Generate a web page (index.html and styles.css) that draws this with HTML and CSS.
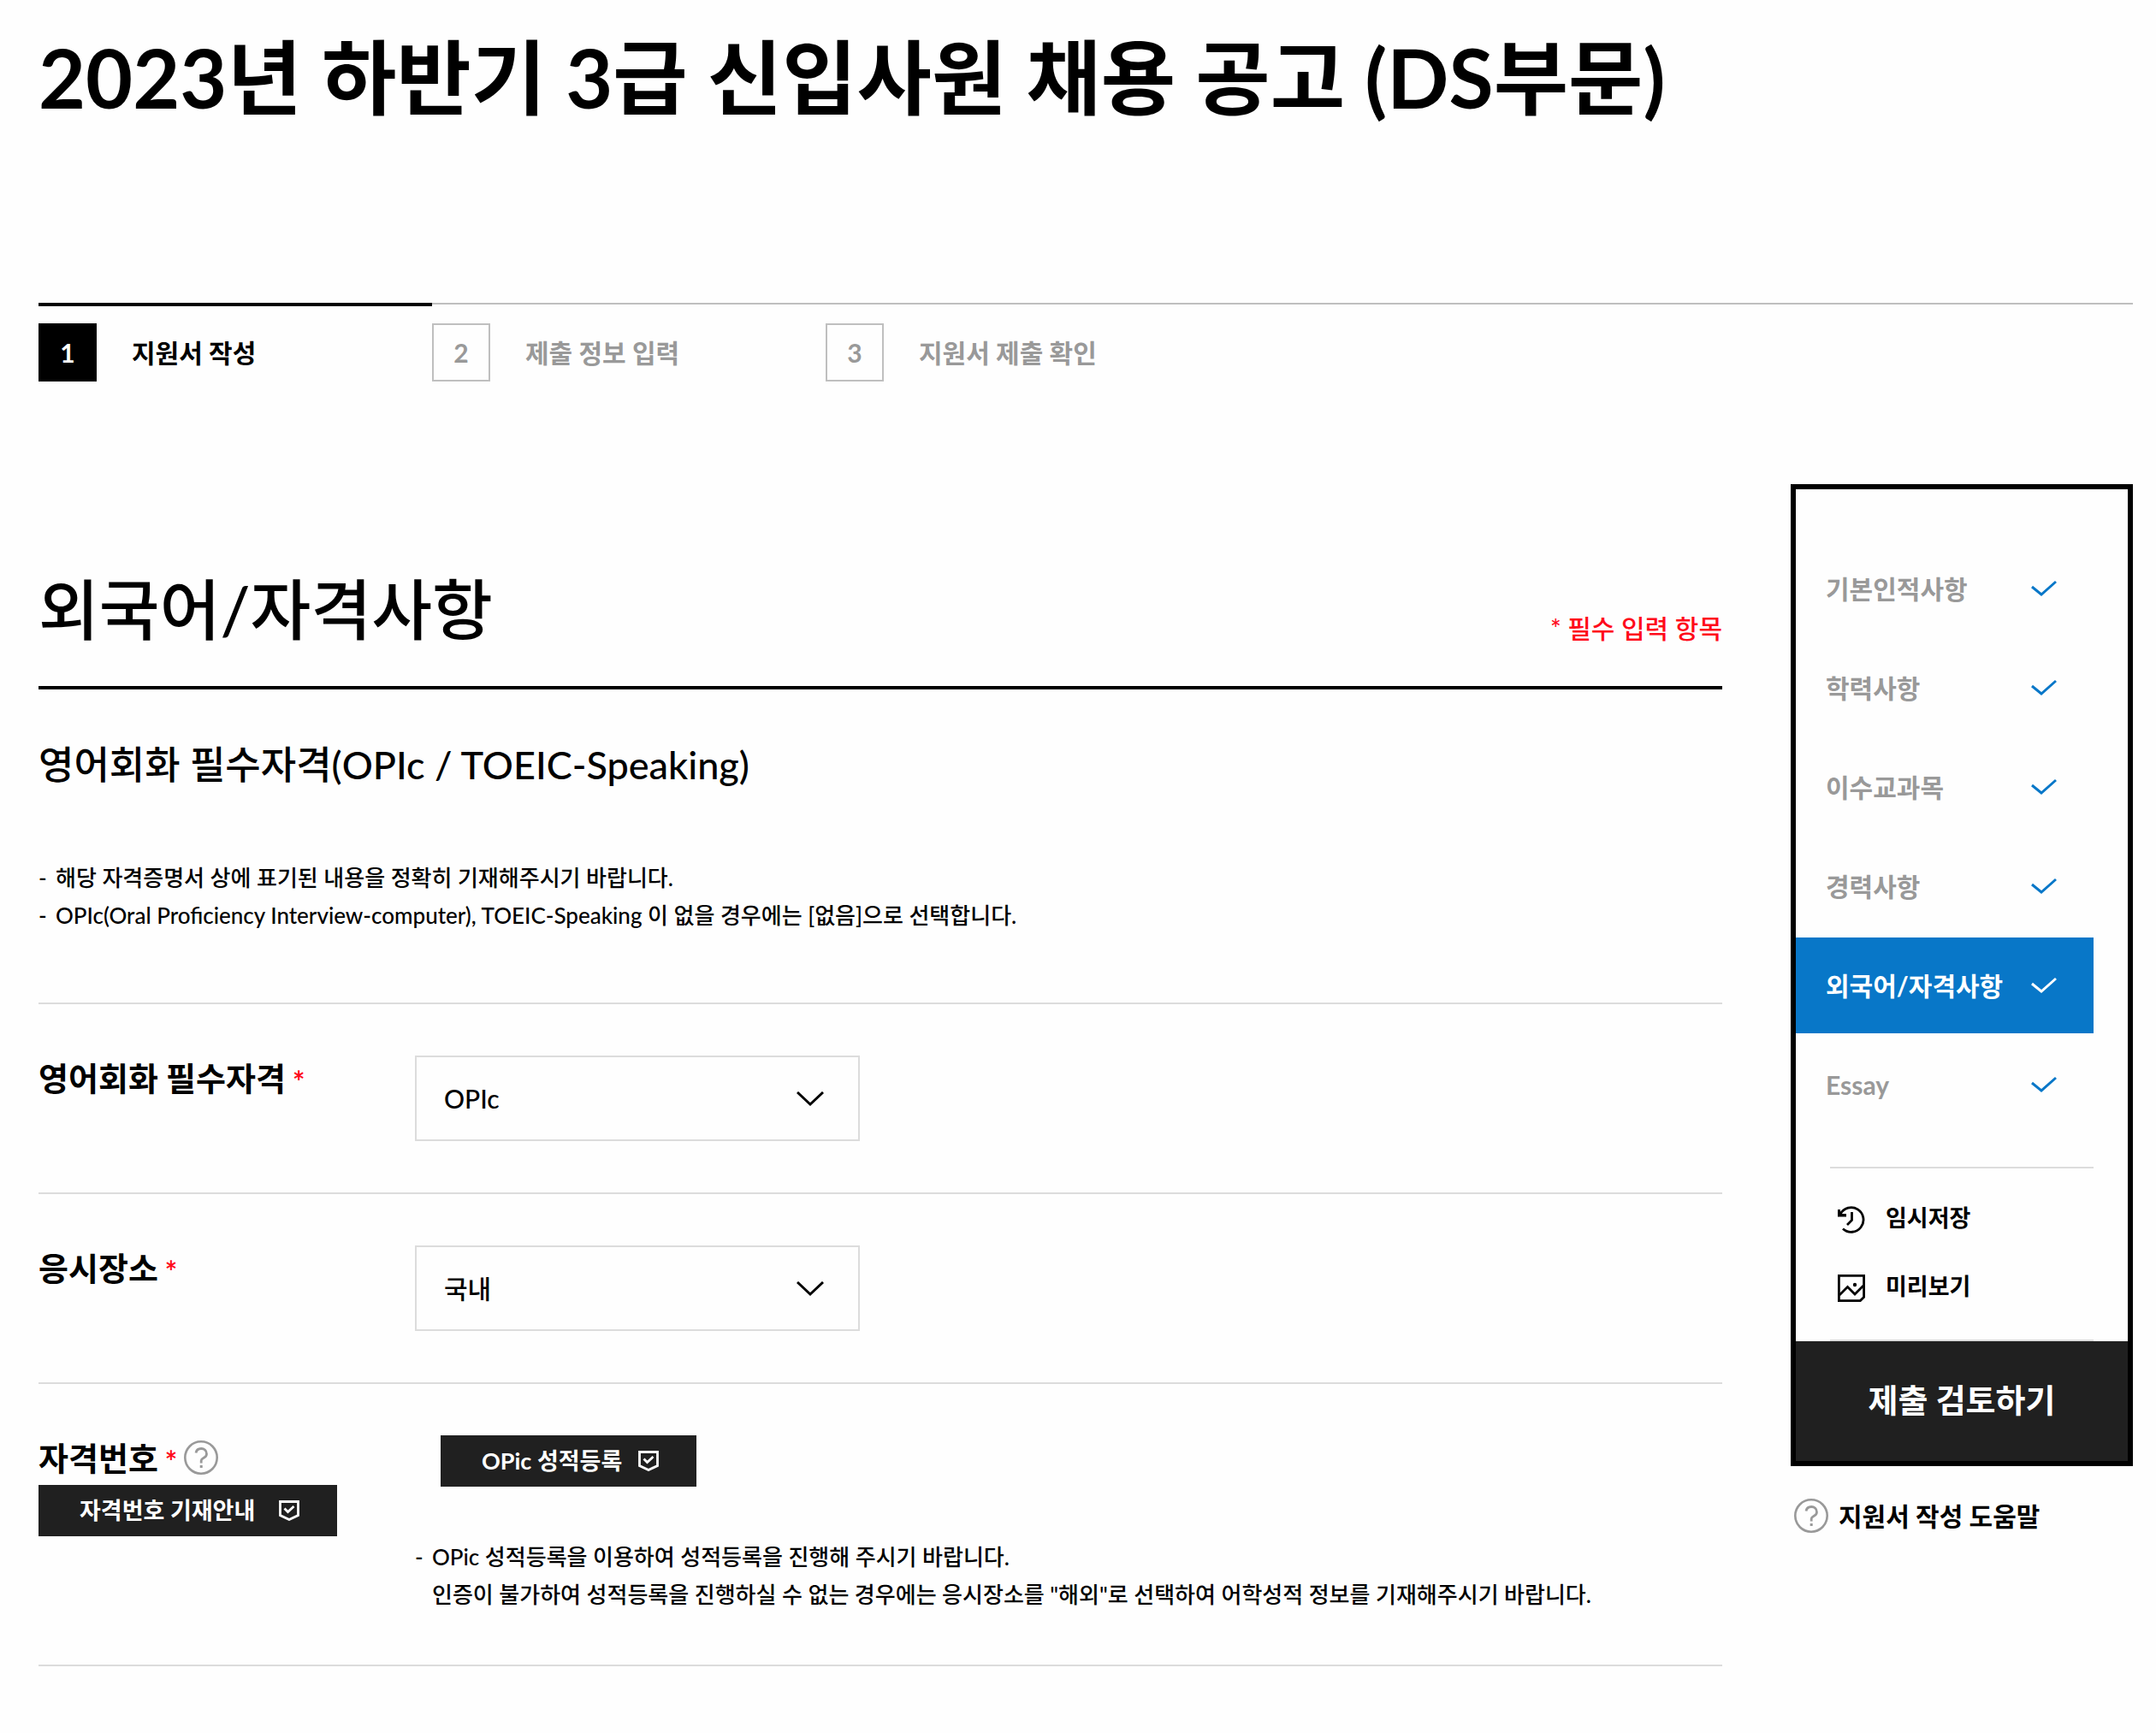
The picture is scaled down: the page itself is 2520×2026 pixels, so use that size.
FILE: index.html
```html
<!DOCTYPE html>
<html lang="ko">
<head>
    <meta charset="UTF-8">
    <meta name="viewport" content="width=device-width, initial-scale=1.0">
    <title>2023년 하반기 3급 신입사원 채용 공고 (DS부문)</title>
    <link rel="stylesheet" href="styles.css">
</head>
<body>

    <!-- Shared icons -->
    <svg class="sprite" aria-hidden="true">
        <symbol id="check" viewBox="0 0 30 20">
            <path d="M1 8l11 9L29 2" fill="none" stroke="currentColor" stroke-width="3"/>
        </symbol>
        <symbol id="chevron" viewBox="0 0 32 18">
            <path d="M1 1l15 14L31 1" fill="none" stroke="currentColor" stroke-width="3"/>
        </symbol>
        <symbol id="shield" viewBox="0 0 24 24">
            <path d="M1.5 1.5h21v16L12 22.5 1.5 17.5z" fill="none" stroke="currentColor" stroke-width="2.8"/>
            <path d="M6.500 9.500l4 4 7-6.500" fill="none" stroke="currentColor" stroke-width="2.8"/>
        </symbol>
        <symbol id="help" viewBox="0 0 40 40">
            <circle cx="20" cy="20" r="18.7" fill="none" stroke="currentColor" stroke-width="2.6"/>
            <path d="M14 14.500c.6-3.500 3-5 6.200-5s6.300 2.200 6.300 6.200c0 5.300-6.300 4.300-6.300 7.800v3" fill="none" stroke="currentColor" stroke-width="2.8"/>
            <path d="M18.7 29h3v3h-3z" fill="currentColor"/>
        </symbol>
        <symbol id="history" viewBox="0 0 32 32">
            <path d="M3 9.5A14.3 14.3 0 1 1 6 26.5" fill="none" stroke="currentColor" stroke-width="2.8"/>
            <path d="M0 4h3v5h7v3.500H0z" fill="currentColor"/>
            <path d="M16.500 7v9.500L11 22" fill="none" stroke="currentColor" stroke-width="2.8"/>
        </symbol>
        <symbol id="picture" viewBox="0 0 32 32">
            <path d="M1.4 1.4h29.2v25l-4.2 4.2h-25z" fill="none" stroke="currentColor" stroke-width="2.8"/>
            <path d="M2 24l9.5-9.5L20 23l10-10" fill="none" stroke="currentColor" stroke-width="2.8"/>
            <circle cx="20" cy="12" r="2.2" fill="currentColor"/>
        </symbol>
    </svg>

    <h1>2023년 하반기 3급 신입사원 채용 공고 (DS부문)</h1>

    <!-- Steps -->
    <ol class="steps">
        <li class="active"><span class="num">1</span>지원서 작성</li>
        <li><span class="num">2</span>제출 정보 입력</li>
        <li><span class="num">3</span>지원서 제출 확인</li>
    </ol>

    <div class="content">

        <!-- Form -->
        <main>
            <header class="form-head">
                <h2>외국어/자격사항</h2>
                <p class="required">* 필수 입력 항목</p>
            </header>

            <h3>영어회화 필수자격(OPIc / TOEIC-Speaking)</h3>
            <ul class="notes">
                <li>해당 자격증명서 상에 표기된 내용을 정확히 기재해주시기 바랍니다.</li>
                <li>OPIc(Oral Proficiency Interview-computer), TOEIC-Speaking 이 없을 경우에는 [없음]으로 선택합니다.</li>
            </ul>

            <form class="fields">
                <div class="row">
                    <div class="label">
                        <label for="exam">영어회화 필수자격</label><span class="star">*</span>
                    </div>
                    <div class="select">
                        <select id="exam">
                            <option>OPIc</option>
                            <option>TOEIC-Speaking</option>
                            <option>없음</option>
                        </select>
                        <svg><use href="#chevron"/></svg>
                    </div>
                </div>

                <div class="row">
                    <div class="label">
                        <label for="place">응시장소</label><span class="star">*</span>
                    </div>
                    <div class="select">
                        <select id="place">
                            <option>국내</option>
                            <option>해외</option>
                        </select>
                        <svg><use href="#chevron"/></svg>
                    </div>
                </div>

                <div class="row">
                    <div>
                        <div class="label">
                            <span>자격번호</span><span class="star">*</span>
                            <svg class="help"><use href="#help"/></svg>
                        </div>
                        <button type="button" class="btn btn-guide">자격번호 기재안내<svg><use href="#shield"/></svg></button>
                    </div>
                    <div>
                        <button type="button" class="btn btn-score">OPic 성적등록<svg><use href="#shield"/></svg></button>
                        <ul class="notes">
                            <li>OPic 성적등록을 이용하여 성적등록을 진행해 주시기 바랍니다.<br>인증이 불가하여 성적등록을 진행하실 수 없는 경우에는 응시장소를 "해외"로 선택하여 어학성적 정보를 기재해주시기 바랍니다.</li>
                        </ul>
                    </div>
                </div>
            </form>
        </main>

        <!-- Sidebar -->
        <aside>
            <div class="panel">
                <nav>
                    <a href="#basic">기본인적사항<svg><use href="#check"/></svg></a>
                    <a href="#school">학력사항<svg><use href="#check"/></svg></a>
                    <a href="#course">이수교과목<svg><use href="#check"/></svg></a>
                    <a href="#career">경력사항<svg><use href="#check"/></svg></a>
                    <a href="#language" class="active">외국어/자격사항<svg><use href="#check"/></svg></a>
                    <a href="#essay">Essay<svg><use href="#check"/></svg></a>
                </nav>
                <div class="tools">
                    <button type="button"><svg><use href="#history"/></svg><span>임시저장</span></button>
                    <button type="button"><svg><use href="#picture"/></svg><span>미리보기</span></button>
                </div>
                <button type="button" class="submit">제출 검토하기</button>
            </div>
            <a href="#help-page" class="help-link"><svg class="help"><use href="#help"/></svg>지원서 작성 도움말</a>
        </aside>

    </div>

</body>
</html>
```

FILE: styles.css
```css
/* Global Styles */
* {
    margin: 0;
    padding: 0;
    box-sizing: border-box;
}

body {
    padding: 34px 27px 78px 45px;
    background-color: #fefefe;
    color: #000;
    font-family: Lato, "Noto Sans CJK KR", sans-serif;
    font-size: 30px;
    font-weight: 500;
    line-height: 40px;
}

button,
select {
    font: inherit;
    border: none;
    background: none;
    color: inherit;
}

button {
    cursor: pointer;
}

a {
    color: inherit;
    text-decoration: none;
}

ul,
ol {
    list-style: none;
}

.sprite {
    display: none;
}

h1 {
    font-size: 95px;
    line-height: 112px;
}

/* Steps */
.steps {
    display: flex;
    align-items: flex-start;
    margin-top: 208px;
    border-top: 2px solid #bfbfbf;
}

.steps li {
    display: flex;
    align-items: center;
    gap: 41px;
    width: 460px;
    padding-top: 22px;
    color: #999;
    font-weight: bold;
}

.steps .num {
    display: flex;
    align-items: center;
    justify-content: center;
    width: 68px;
    height: 68px;
    border: 2px solid #bfbfbf;
}

.steps .active {
    margin-top: -2px;
    padding-top: 20px;
    border-top: 4px solid #000;
    color: #000;
}

.steps .active .num {
    border-color: #000;
    background: #000;
    color: #fff;
}

/* Layout */
.content {
    display: grid;
    grid-template-columns: 1fr 400px;
    gap: 80px;
    margin-top: 120px;
}

main {
    padding-top: 96px;
}

/* Form */
.form-head {
    display: flex;
    align-items: flex-end;
    justify-content: space-between;
    padding-bottom: 40px;
    border-bottom: 4px solid #000;
}

h2 {
    font-size: 77px;
    font-weight: 500;
    line-height: 100px;
}

.required {
    margin-bottom: 8px;
    color: #ff0a1b;
}

h3 {
    margin-top: 58px;
    font-size: 45px;
    font-weight: 500;
    line-height: 60px;
}

.notes {
    margin-top: 80px;
    font-size: 26px;
    line-height: 44px;
}

.notes li {
    display: grid;
    grid-template-columns: 20px 1fr;
}

.notes li::before {
    content: "-";
}

.fields {
    margin-top: 80px;
    border-bottom: 2px solid #dcdcdc;
}

.row {
    display: grid;
    grid-template-columns: 440px 1fr;
    align-items: start;
    padding: 60px 0;
    border-top: 2px solid #dcdcdc;
}

.row .notes {
    margin-top: 60px;
}

.label {
    display: flex;
    align-items: center;
    gap: 8px;
    font-size: 38px;
    font-weight: bold;
    line-height: 52px;
}

.star {
    padding-top: 8px;
    color: #ff0a1b;
    font-size: 34px;
    line-height: 44px;
}

.help {
    width: 40px;
    height: 40px;
    color: #999;
}

.select {
    position: relative;
    width: 520px;
}

.select select {
    width: 100%;
    height: 100px;
    padding: 0 80px 0 32px;
    border: 2px solid #dcdcdc;
    appearance: none;
}

.select svg {
    position: absolute;
    top: 42px;
    right: 42px;
    width: 32px;
    height: 18px;
    pointer-events: none;
}

.btn {
    display: flex;
    align-items: center;
    height: 60px;
    padding: 0 44px 0 48px;
    background: #202020;
    color: #fff;
    font-size: 27px;
    font-weight: bold;
}

.btn svg {
    width: 24px;
    height: 24px;
}

.btn-guide {
    gap: 28px;
    margin-top: 6px;
}

.btn-score {
    gap: 19px;
    margin-left: 30px;
}

/* Sidebar */
aside {
    font-weight: bold;
}

.panel {
    border: 6px solid #000;
}

nav {
    display: flex;
    flex-direction: column;
    gap: 4px;
    padding: 60px 40px 40px 0;
    color: #999;
}

nav a {
    display: flex;
    align-items: center;
    justify-content: space-between;
    height: 112px;
    padding: 0 43px 0 35px;
}

nav svg {
    width: 30px;
    height: 20px;
    color: #0877c8;
}

nav .active {
    background: #0877c8;
    color: #fff;
}

nav .active svg {
    color: #fff;
}

.tools {
    margin: 0 40px;
    padding: 20px 9px;
    border-top: 2px solid #dcdcdc;
    border-bottom: 2px solid #dcdcdc;
}

.tools button {
    display: flex;
    align-items: center;
    gap: 24px;
    height: 80px;
    font-size: 27px;
    font-weight: bold;
}

.tools svg {
    width: 32px;
    height: 32px;
}

.tools span {
    margin-bottom: 4px;
}

.submit {
    display: block;
    width: 100%;
    height: 140px;
    padding-bottom: 4px;
    background: #202020;
    color: #fff;
    font-size: 38px;
    font-weight: bold;
}

.help-link {
    display: flex;
    align-items: center;
    gap: 12px;
    margin: 38px 0 0 4px;
}
```
